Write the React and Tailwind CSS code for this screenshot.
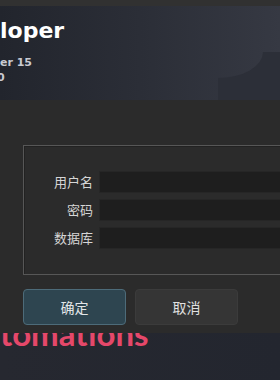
export default function App() {
  const fields = ['用户名', '密码', '数据库'];

  return (
    <div className="w-[280px] h-[380px] overflow-hidden flex flex-col bg-[#22252d] font-['Noto_Sans_CJK_SC',sans-serif]">
      {/* window strip */}
      <div className="h-[6px] shrink-0 bg-[#313131]" />

      {/* hero behind the dialog */}
      <div className="relative h-[94px] shrink-0 bg-gradient-to-r from-[#22252d] via-[#2b2e37] to-[#363943] font-['DejaVu_Sans',sans-serif] font-bold">
        <svg className="absolute inset-0" width="280" height="94" viewBox="0 0 280 94">
          <path d="M218,94 L218,72 A45,26 0 0 0 263,46 L280,46 L280,94 Z" fill="#2c2f38" />
        </svg>
        <div className="relative pt-[12px]">
          <div className="text-[22px] leading-[26px] text-white">loper</div>
          <div className="mt-[12px] text-[11px] leading-[13px] text-[#c9cbd2]">er 15</div>
          <div className="-ml-[3px] mt-[2px] text-[11px] leading-[13px] text-[#c9cbd2]">0</div>
        </div>
      </div>

      {/* dialog */}
      <div className="relative z-10 h-[233px] shrink-0 bg-[#2b2b2b] pl-[23px] pt-[45px]">
        <div className="h-[130px] border border-r-0 border-[#575757] shadow-[inset_1px_1px_0_#222]">
          <div className="flex flex-col gap-[6px] pt-[25px]">
            {fields.map((label) => (
              <div key={label} className="flex items-center">
                <div className="w-[75px] pr-[6px] text-right text-[13px] leading-[22px] text-[#d6d6d6]">{label}</div>
                <div className="h-[22px] flex-1 border border-r-0 border-[#262626] bg-[#1e1e1e]" />
              </div>
            ))}
          </div>
        </div>

        <div className="mt-[14px] flex gap-[9px]">
          <button className="h-[36px] w-[103px] rounded-[4px] border border-[#4d6b79] bg-[#2e4550] text-[14px] text-[#e2e6e8]">
            确定
          </button>
          <button className="h-[36px] w-[103px] rounded-[4px] border border-[#3b3b3b] bg-[#353535] text-[14px] text-[#e0e0e0]">
            取消
          </button>
        </div>
      </div>

      {/* hero text peeking below */}
      <div className="h-[47px] shrink-0 overflow-hidden bg-gradient-to-r from-[#262830] to-[#23262f]">
        <div className="-mt-[16px] whitespace-nowrap font-['Lato',sans-serif] text-[33px] font-bold leading-none text-[#e5486a]">
          tomations
        </div>
      </div>
    </div>
  );
}
